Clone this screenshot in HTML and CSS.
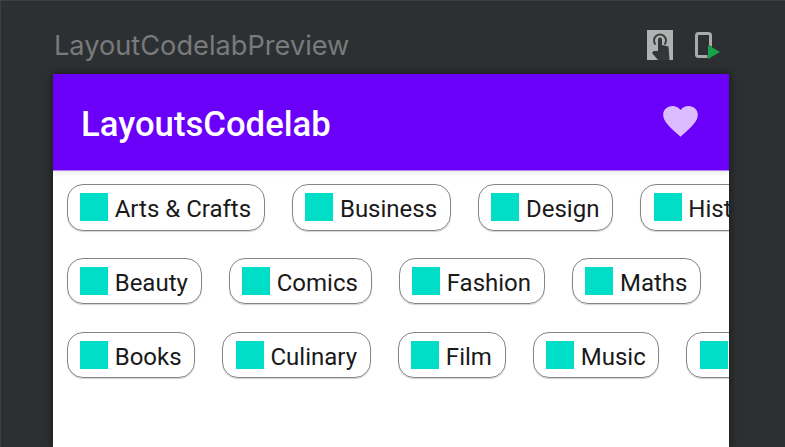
FILE: index.html
```html
<!DOCTYPE html>
<html lang="en">
<head>
	<meta charset="UTF-8">
	<meta name="viewport" content="width=device-width, initial-scale=1.0">
	<title>LayoutCodelabPreview</title>
	<link rel="stylesheet" href="styles.css">
</head>
<body>
	<div class="toolbar">
		<span class="preview-name">LayoutCodelabPreview</span>
		<div class="tools">
			<svg class="tool-icon" width="26" height="30" viewBox="0 0 26 30">
				<rect x="0" y="0" width="26" height="30" fill="#b0b2b2"/>
				<path d="M8.500 14.500a6 6 0 1 1 9 0" fill="none" stroke="#3c3f41" stroke-width="2"/>
				<path d="M11 21V9.500a2 2 0 0 1 4 0V15l6.500 1.500 1 13.500H11L5 23l1.500-2z" fill="#34373a"/>
			</svg>
			<svg class="tool-icon phone" width="25" height="28" viewBox="0 0 25 28">
				<rect x="1.500" y="1.500" width="14" height="23" rx="2" fill="none" stroke="#a9abab" stroke-width="3"/>
				<path d="M13 13l12 7-12 7z" fill="#17a34a" stroke="#2d3032" stroke-width="1" paint-order="stroke"/>
			</svg>
		</div>
	</div>
	<div class="device">
		<div class="app-bar">
			<span class="app-title">LayoutsCodelab</span>
			<svg class="heart" width="35" height="31" viewBox="0 0 24 21.500">
				<path d="M12 21.400l-1.700-1.600C4.100 14.300 0 10.600 0 6.100 0 2.500 2.800 0 6.400 0c2.200 0 4.200 1 5.600 2.700C13.400 1 15.400 0 17.600 0 21.200 0 24 2.500 24 6.100c0 4.500-4.100 8.200-10.300 13.700z" fill="#dcbcff"/>
			</svg>
		</div>
		<div class="chips">
			<div class="chip-row">
				<div class="chip"><span class="swatch"></span><span class="chip-label">Arts &amp; Crafts</span></div>
				<div class="chip"><span class="swatch"></span><span class="chip-label">Business</span></div>
				<div class="chip"><span class="swatch"></span><span class="chip-label">Design</span></div>
				<div class="chip"><span class="swatch"></span><span class="chip-label">History</span></div>
			</div>
			<div class="chip-row">
				<div class="chip"><span class="swatch"></span><span class="chip-label">Beauty</span></div>
				<div class="chip"><span class="swatch"></span><span class="chip-label">Comics</span></div>
				<div class="chip"><span class="swatch"></span><span class="chip-label">Fashion</span></div>
				<div class="chip"><span class="swatch"></span><span class="chip-label">Maths</span></div>
			</div>
			<div class="chip-row">
				<div class="chip"><span class="swatch"></span><span class="chip-label">Books</span></div>
				<div class="chip"><span class="swatch"></span><span class="chip-label">Culinary</span></div>
				<div class="chip"><span class="swatch"></span><span class="chip-label">Film</span></div>
				<div class="chip"><span class="swatch"></span><span class="chip-label">Music</span></div>
				<div class="chip"><span class="swatch"></span><span class="chip-label">Painting</span></div>
			</div>
		</div>
	</div>
</body>
</html>
```

FILE: styles.css
```css
html, body {
	height: 100%;
}
body {
	margin: 0;
	background-color: #2d3032;
	box-shadow: inset 1px 1px 0 #3d4042;
	font-family: Roboto, sans-serif;
	overflow: hidden;
}
.toolbar {
	height: 74px;
	box-sizing: border-box;
	padding: 30px 65px 0 54px;
	display: flex;
	justify-content: space-between;
	align-items: flex-start;
}
.preview-name {
	font-family: Inter, sans-serif;
	font-size: 27.2px;
	line-height: 32px;
	color: #787a7b;
}
.tools {
	display: flex;
	gap: 22px;
}
.tool-icon {
	display: block;
}
.phone {
	margin-top: 2px;
}
.device {
	width: 676px;
	height: 373px;
	margin-left: 53px;
	background-color: #fff;
	box-shadow: 0 0 9px rgba(0, 0, 0, 0.55);
	overflow: hidden;
}
.app-bar {
	height: 97px;
	padding: 0 31px 1px 28px;
	display: flex;
	justify-content: space-between;
	align-items: center;
	background-color: #6a00fa;
	box-shadow: 0 1px 6px rgba(0, 0, 0, 0.12);
	border-bottom: 1px solid #b07ef5;
	box-sizing: border-box;
}
.app-title {
	font-size: 34.7px;
	font-weight: 500;
	color: #fff;
	margin-top: 5px;
}
.chips {
	padding: 13px 13.500px;
	display: flex;
	flex-direction: column;
	gap: 27.300px;
}
.chip-row {
	display: flex;
	gap: 27px;
}
.chip {
	flex-shrink: 0;
	height: 46.500px;
	box-sizing: border-box;
	padding: 0 12.700px 0 12.500px;
	display: flex;
	align-items: center;
	gap: 6.700px;
	border: 1px solid #858585;
	border-radius: 16px;
	box-shadow: 0 1px 1px rgba(0, 0, 0, 0.18);
	font-size: 24px;
	color: #1a1a1a;
}
.chip-label {
	margin-top: 4px;
}
.swatch {
	width: 28px;
	height: 28px;
	background-color: #00dec7;
}
```
